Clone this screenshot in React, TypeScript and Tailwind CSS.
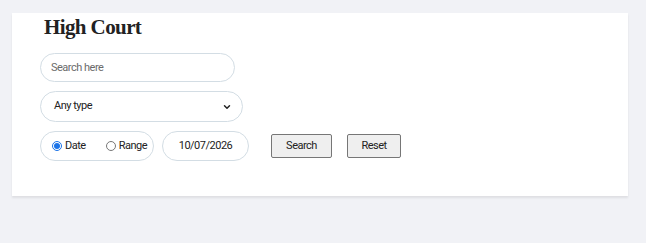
import { ChevronDown } from 'lucide-react'

export default function App() {
  return (
    <div className="min-h-[243px] w-full bg-[#f1f2f6] pt-[13px] pl-[12px] pr-[18px] pb-[46px] font-['Roboto',sans-serif]">
      <div className="h-[183px] bg-white shadow-[0_2px_2px_rgba(0,0,0,0.08)] pl-[28px] pt-[1px]">
        <h1 className="font-['Liberation_Serif',serif] font-bold text-[21px] leading-[26px] tracking-[-0.6px] text-[#222] pl-[4px]">High Court</h1>

        <div className="mt-[13px] flex flex-col gap-[9px] text-[11px] tracking-[-0.5px]">
          <input
            placeholder="Search here"
            className="w-[195px] h-[29px] rounded-full border border-[#d3dde4] px-[10px] text-[#333] placeholder:text-[#6b6b6b] outline-none"
          />

          <div className="w-[203px] h-[31px] rounded-full border border-[#d3dde4] pl-[13px] pr-[10px] flex items-center justify-between text-[#222]">
            <span>Any type</span>
            <ChevronDown className="w-[10px] h-[10px] text-[#222]" strokeWidth={3.5} />
          </div>

          <div className="flex items-center">
            <div className="w-[114px] h-[30px] rounded-full border border-[#d3dde4] pl-[11px] flex items-center text-[#222]">
              <label className="flex items-center gap-[3px]">
                <span className="w-[10px] h-[10px] rounded-full border border-[#1a73e8] flex items-center justify-center">
                  <span className="w-[6px] h-[6px] rounded-full bg-[#1a73e8]" />
                </span>
                Date
              </label>
              <label className="flex items-center gap-[3px] ml-[20px]">
                <span className="w-[10px] h-[10px] rounded-full border border-[#777]" />
                Range
              </label>
            </div>

            <div className="ml-[8px] w-[87px] h-[30px] rounded-full border border-[#d3dde4] flex items-center justify-center text-[#222]">
              10/07/2026
            </div>

            <button className="ml-[22px] w-[61px] h-[24px] border border-[#767676] rounded-[2px] bg-[#efefef] text-[#222]">
              Search
            </button>
            <button className="ml-[15px] w-[54px] h-[24px] border border-[#767676] rounded-[2px] bg-[#efefef] text-[#222]">
              Reset
            </button>
          </div>
        </div>
      </div>
    </div>
  )
}
